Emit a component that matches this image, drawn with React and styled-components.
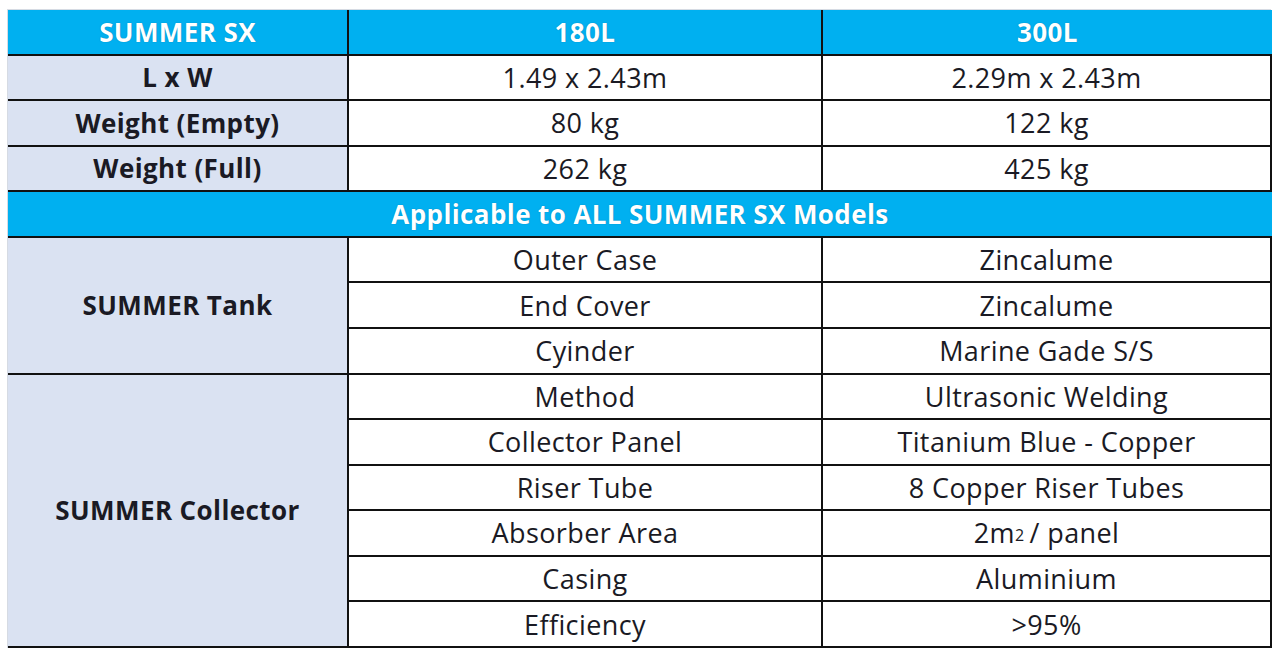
import React from "react";
import styled, {createGlobalStyle} from "styled-components";

const GlobalStyle = createGlobalStyle`
  html, body {
    margin: 0;
    padding: 0;
    background: #ffffff;
  }
  body {
    font-family: "Open Sans", Lato, sans-serif;
  }
`;

const Page = styled.div`
  width: 1280px;
  height: 660px;
  padding: 9px 0 0 7px;
  box-sizing: border-box;
  background: #ffffff;
`;

const Table = styled.div`
  display: grid;
  grid-template-columns: 341px 474px 449px;
  grid-auto-rows: 45.57px;
  width: 1264px;
  border-top: 1px solid #d6dbe3;
  border-left: 1px solid #d6dbe3;
  box-sizing: border-box;
`;

const Cell = styled.div`
  display: flex;
  align-items: center;
  justify-content: center;
  box-sizing: border-box;
  border-right: 2px solid #111;
  border-bottom: 2px solid #111;
  font-size: 27px;
  letter-spacing: 0.4px;
  color: #1a1a24;
  white-space: nowrap;
  background: ${p => p.$variant === "head" ? "#00b0f0" : p.$variant === "label" ? "#dae2f2" : "#ffffff"};
  ${p => p.$variant === "head" && `
    color: #ffffff;
    font-weight: 700;
    font-size: 26px;
    letter-spacing: 0.4px;
    text-shadow: 0 0 1px rgba(0, 60, 100, 0.5);
  `}
  ${p => p.$variant === "label" && `
    font-weight: 700;
    font-size: 26px;
    letter-spacing: 0.4px;
  `}
  ${p => p.$noRight && `border-right: none;`}
  ${p => p.$span && `grid-column: 1 / span 3;`}
`;

const Sub = styled.span`
  font-size: 16px;
  position: relative;
  top: 2px;
  margin-right: 5px;
`;

const sizeRows = [
  ["L x W", "1.49 x 2.43m", "2.29m x 2.43m"],
  ["Weight (Empty)", "80 kg", "122 kg"],
  ["Weight (Full)", "262 kg", "425 kg"],
];

const groups = [
  {
    label: "SUMMER Tank",
    rows: [
      ["Outer Case", "Zincalume"],
      ["End Cover", "Zincalume"],
      ["Cyinder", "Marine Gade S/S"],
    ],
  },
  {
    label: "SUMMER Collector",
    rows: [
      ["Method", "Ultrasonic Welding"],
      ["Collector Panel", "Titanium Blue - Copper"],
      ["Riser Tube", "8 Copper Riser Tubes"],
      ["Absorber Area", <>2m<Sub>2</Sub>/ panel</>],
      ["Casing", "Aluminium"],
      ["Efficiency", ">95%"],
    ],
  },
];

export default function App() {
  return (
    <Page>
      <GlobalStyle/>
      <Table>
        <Cell $variant="head">SUMMER SX</Cell>
        <Cell $variant="head">180L</Cell>
        <Cell $variant="head" $noRight>300L</Cell>

        {sizeRows.map(([label, a, b]) => (
          <React.Fragment key={label}>
            <Cell $variant="label">{label}</Cell>
            <Cell>{a}</Cell>
            <Cell>{b}</Cell>
          </React.Fragment>
        ))}

        <Cell $variant="head" $span $noRight>Applicable to ALL SUMMER SX Models</Cell>

        {groups.map(group => (
          <React.Fragment key={group.label}>
            <Cell $variant="label" style={{gridRow: `span ${group.rows.length}`}}>
              {group.label}
            </Cell>
            {group.rows.map(([name, value], i) => (
              <React.Fragment key={i}>
                <Cell style={{gridColumn: 2}}>{name}</Cell>
                <Cell style={{gridColumn: 3}}>{value}</Cell>
              </React.Fragment>
            ))}
          </React.Fragment>
        ))}
      </Table>
    </Page>
  );
}
